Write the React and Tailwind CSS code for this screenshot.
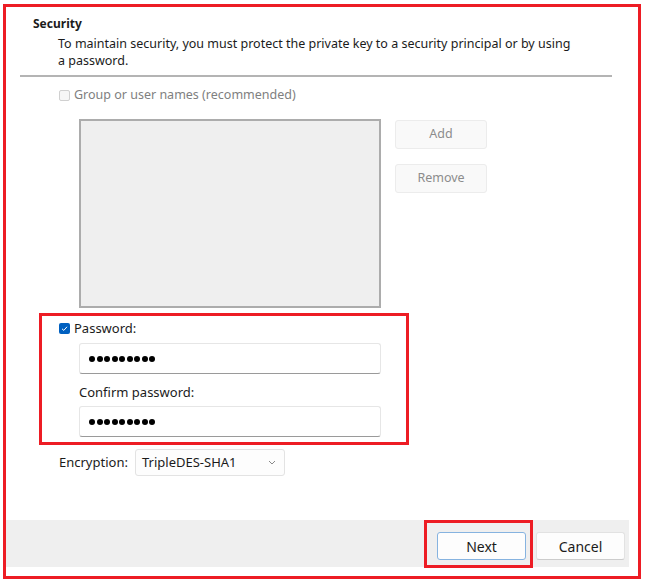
import React from "react";

function Dots() {
  return (
    <div className="flex items-center gap-[1.5px]">
      {Array.from({ length: 9 }).map((_, i) => (
        <span key={i} className="block w-[6px] h-[6px] rounded-full bg-black" />
      ))}
    </div>
  );
}

function PwInput() {
  return (
    <div className="w-[302px] h-[31px] bg-white border border-[#e6e6e6] border-b-[#9a9a9a] rounded-[3px] flex items-center pl-[9px]">
      <Dots />
    </div>
  );
}

export default function App() {
  return (
    <div className="w-[645px] h-[582px] bg-white pl-[3px] pt-[4px] font-['Noto_Sans',sans-serif] text-[12.5px] text-[#1b1b1b]">
      <div className="w-[638px] h-[575px] border-[3px] border-[#ed1c24] flex flex-col">
        <div className="pl-[27px] pt-[8px] font-bold text-[12px] leading-[17px] whitespace-nowrap">Security</div>
        <div className="pl-[52px] mt-[3px] leading-[17px] whitespace-nowrap">
          To maintain security, you must protect the private key to a security principal or by using
          <br />a password.
        </div>
        <div className="ml-[14px] mt-[6px] w-[592px] h-[2px] bg-[#b4b4b4]" />
        <div className="flex items-center ml-[53px] mt-[10px] h-[17px] text-[#808080]">
          <span className="block w-[11px] h-[11px] border border-[#d0d0d0] rounded-[2px] bg-[#f6f6f6]" />
          <span className="ml-[4px] whitespace-nowrap">Group or user names (recommended)</span>
        </div>
        <div className="flex ml-[73px] mt-[15px]">
          <div className="w-[302px] h-[189px] border-2 border-[#acacac] bg-[#efefef]" />
          <div className="ml-[14px] pt-[1px] flex flex-col gap-[15px]">
            <div className="w-[92px] h-[29px] flex items-center justify-center bg-[#f9f9f9] border border-[#ececec] rounded-[3px] text-[#8c8c8c]">Add</div>
            <div className="w-[92px] h-[29px] flex items-center justify-center bg-[#f9f9f9] border border-[#ececec] rounded-[3px] text-[#8c8c8c]">Remove</div>
          </div>
        </div>
        <div className="ml-[33px] mt-[5px] w-[370px] h-[132px] border-[3px] border-[#ed1c24] pt-[4px] flex flex-col">
          <div className="flex items-center pl-[17px] h-[17px]">
            <span className="flex items-center justify-center w-[11px] h-[11px] rounded-[2px] bg-[#0060c0]">
              <svg width="7" height="7" viewBox="0 0 7 7">
                <polyline points="1,3.8 2.8,5.4 6,1.8" fill="none" stroke="white" strokeWidth="1" />
              </svg>
            </span>
            <span className="ml-[4px] text-[13px]">Password:</span>
          </div>
          <div className="ml-[37px] mt-[6px]">
            <PwInput />
          </div>
          <div className="ml-[37px] mt-[10px] h-[17px] flex items-center text-[13px] whitespace-nowrap">Confirm password:</div>
          <div className="ml-[37px] mt-[5px]">
            <PwInput />
          </div>
        </div>
        <div className="flex items-center ml-[53px] mt-[4px]">
          <span className="text-[13px] whitespace-nowrap w-[76px]">Encryption:</span>
          <div className="w-[150px] h-[27px] bg-[#fdfdfd] border border-[#e3e3e3] rounded-[3px] flex items-center pl-[6px] pr-[8px] justify-between">
            <span className="text-[13px] whitespace-nowrap">TripleDES-SHA1</span>
            <svg width="8" height="5" viewBox="0 0 8 5">
              <polyline points="1,1 4,4 7,1" fill="none" stroke="#8a8a8a" strokeWidth="1" />
            </svg>
          </div>
        </div>
        <div className="flex-1" />
        <div className="mb-[9px] mr-[9px] h-[47px] bg-[#efefef] flex justify-end items-start pr-[4px]">
          <div className="w-[109px] h-[48px] shrink-0 border-[3px] border-[#ed1c24] pt-[9px] pl-[10px]">
            <div className="w-[89px] h-[28px] bg-[#fdfdfd] border border-[#86b3e0] rounded-[3px] flex items-center justify-center text-[14px]">Next</div>
          </div>
          <div className="ml-[3px] mt-[12px] w-[89px] h-[28px] bg-[#fdfdfd] border border-[#e2e2e2] border-b-[#cccccc] rounded-[3px] flex items-center justify-center text-[14px]">Cancel</div>
        </div>
      </div>
    </div>
  );
}
